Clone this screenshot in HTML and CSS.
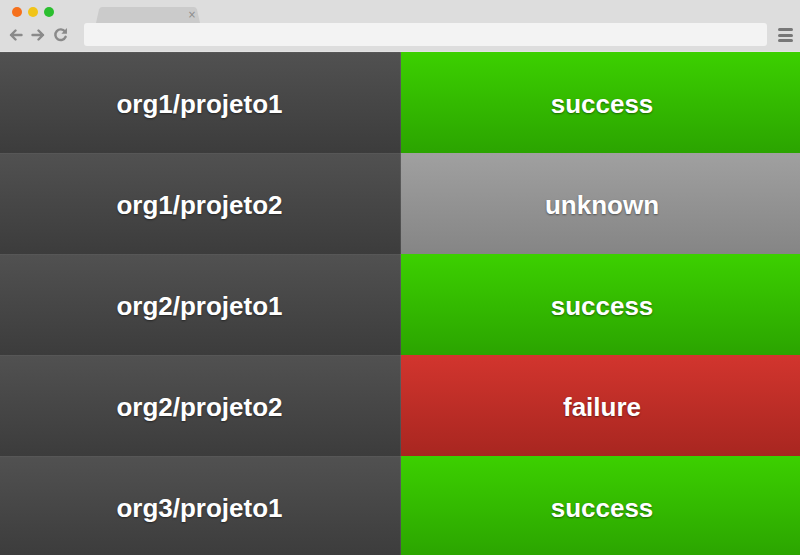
FILE: index.html
```html
<!DOCTYPE html>
<html>
<head>
<meta charset="utf-8">
<link rel="stylesheet" href="styles.css">
</head>
<body>
<div class="chrome">
  <div class="chrome-top">
    <div class="lights">
      <span class="light orange"></span>
      <span class="light yellow"></span>
      <span class="light green"></span>
    </div>
    <svg class="tab" width="104" height="16" viewBox="0 0 104 16">
      <path d="M0 16 L3 2.5 Q3.6 0 6 0 L98 0 Q100.4 0 101 2.5 L104 16 Z" fill="#cbcbcb"/>
      <text x="96" y="10.5" text-anchor="middle" class="tab-x">×</text>
    </svg>
  </div>
  <div class="chrome-bar">
    <div class="nav">
      <svg width="14" height="12" viewBox="0 0 14 12"><path d="M12.5 6 H2 M6.5 1.5 L2 6 L6.5 10.5" fill="none" stroke="#8a8a8a" stroke-width="2.4" stroke-linecap="round" stroke-linejoin="round"/></svg>
      <svg width="14" height="12" viewBox="0 0 14 12"><path d="M1.5 6 H12 M7.5 1.5 L12 6 L7.5 10.5" fill="none" stroke="#8a8a8a" stroke-width="2.4" stroke-linecap="round" stroke-linejoin="round"/></svg>
      <svg width="15" height="15" viewBox="0 0 14 14"><path d="M11.2 4.2 A5 5 0 1 0 11.8 9.2" fill="none" stroke="#8a8a8a" stroke-width="2.3" stroke-linecap="round"/><path d="M13 1 L13 6.2 L7.8 6.2 Z" fill="#8a8a8a"/></svg>
    </div>
    <div class="address"></div>
    <div class="menu"><span></span><span></span><span></span></div>
  </div>
</div>
<div class="board">
  <div class="cell name">org1/projeto1</div>
  <div class="cell status success">success</div>
  <div class="cell name">org1/projeto2</div>
  <div class="cell status unknown">unknown</div>
  <div class="cell name">org2/projeto1</div>
  <div class="cell status success">success</div>
  <div class="cell name">org2/projeto2</div>
  <div class="cell status failure">failure</div>
  <div class="cell name">org3/projeto1</div>
  <div class="cell status success">success</div>
</div>
</body>
</html>
```

FILE: styles.css
```css
html, body {
  margin: 0;
  padding: 0;
}
body {
  width: 800px;
  height: 555px;
  overflow: hidden;
  background: #3d3d3d;
  font-family: "Liberation Sans", Arial, sans-serif;
}
.chrome {
  height: 52px;
  background: #dddddd;
  display: flex;
  flex-direction: column;
  box-sizing: border-box;
  border-bottom: 1px solid #e3e3e3;
}
.chrome-top {
  height: 23px;
  display: flex;
  align-items: flex-start;
}
.lights {
  display: flex;
  gap: 6px;
  margin-left: 12px;
  margin-top: 7px;
}
.light {
  width: 10px;
  height: 10px;
  border-radius: 50%;
  display: block;
}
.orange { background: #f5701c; }
.yellow { background: #f1c418; }
.green { background: #2bbf2f; }
.tab {
  display: block;
  margin-left: 42px;
  margin-top: 7px;
}
.tab-x {
  font-family: "DejaVu Sans", sans-serif;
  font-size: 10px;
  fill: #8c8c8c;
}
.chrome-bar {
  height: 23px;
  display: flex;
  align-items: center;
}
.nav {
  width: 84px;
  display: flex;
  align-items: center;
  box-sizing: border-box;
  padding-left: 9px;
}
.nav svg { display: block; }
.nav svg:nth-child(2) { margin-left: 8px; }
.nav svg:nth-child(3) { margin-left: 8px; }
.address {
  width: 683px;
  height: 23px;
  background: #f3f3f3;
  border-radius: 3px;
}
.menu {
  margin-left: 11px;
  display: flex;
  flex-direction: column;
  gap: 2.4px;
  padding-top: 1px;
}
.menu span {
  display: block;
  width: 15px;
  height: 3px;
  border-radius: 2px;
  background: #777777;
}
.board {
  display: grid;
  grid-template-columns: 401px 399px;
  grid-auto-rows: 101px;
}
.cell {
  display: flex;
  align-items: center;
  justify-content: center;
  color: #ffffff;
  font-weight: bold;
  font-size: 26px;
  text-shadow: 0 1px 2px rgba(0, 0, 0, 0.45);
  box-sizing: border-box;
  padding-top: 3px;
}
.name {
  background: linear-gradient(to bottom, #515151, #3c3c3c);
  box-shadow: inset -1px 0 0 rgba(255, 255, 255, 0.08), inset 0 1px 0 rgba(255, 255, 255, 0.04);
  padding-right: 2px;
}
.status {
  padding-left: 3px;
}
.success {
  background: linear-gradient(to bottom, #3cd000, #2ba400);
}
.unknown {
  background: linear-gradient(to bottom, #a0a0a0, #858585);
}
.failure {
  background: linear-gradient(to bottom, #d2352e, #a82620);
}
```
